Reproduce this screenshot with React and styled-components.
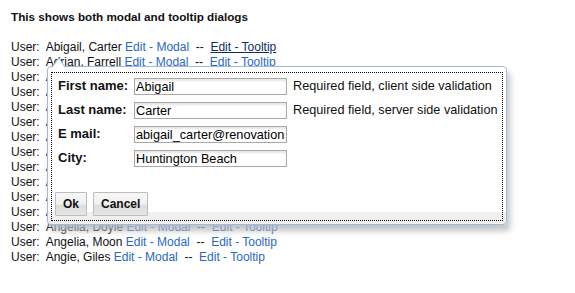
import React from "react";
import styled, { createGlobalStyle } from "styled-components";

const Global = createGlobalStyle`
  html, body { margin: 0; padding: 0; background: #fff; }
  body { font-family: "Liberation Sans", Arial, sans-serif; color: #111; }
`;

const Page = styled.div`
  position: relative;
  padding: 10px 11px 0;
  width: 575px;
  height: 293px;
  box-sizing: border-box;
  overflow: hidden;
`;

const Title = styled.div`
  font-size: 11.7px;
  font-weight: bold;
  line-height: 13px;
  margin-bottom: 17px;
`;

const List = styled.div`
  display: flex;
  flex-direction: column;
`;

const Row = styled.div`
  font-size: 12px;
  line-height: 15px;
  white-space: nowrap;
`;

const Link = styled.a`
  color: ${(p) => (p.$hover ? "#0b2d63" : "#2a67c4")};
  text-decoration: ${(p) => (p.$hover ? "underline" : "none")};
  cursor: pointer;
`;

const Modal = styled.div`
  position: absolute;
  left: 47px;
  top: 66px;
  width: 460px;
  box-sizing: border-box;
  border: 1px solid #9dbcdb;
  border-radius: 4px;
  padding: 5px 3px 3px;
  background: linear-gradient(to bottom, #fff calc(100% - 12px), #f0f0f0 calc(100% - 12px));
  box-shadow: 3px 6px 6px rgba(185, 185, 185, 0.85);
`;

const Beak = styled.svg`
  position: absolute;
  left: 4px;
  top: -10px;
  width: 14px;
  height: 11px;
  overflow: visible;
`;

const Inner = styled.div`
  border: 1px dotted #000;
  padding: 5px 0 4px;
`;

const Form = styled.div`
  display: grid;
  grid-template-columns: 70px 153px auto;
  column-gap: 6px;
  row-gap: 7px;
  padding-left: 6px;
  align-items: center;
`;

const Label = styled.label`
  font-size: 13px;
  font-weight: bold;
  white-space: nowrap;
  line-height: 15px;
  margin-top: -2px;
`;

const Input = styled.input`
  box-sizing: border-box;
  width: 153px;
  height: 17px;
  margin: 0;
  padding: 0 1px;
  line-height: 15px;
  border: 1px solid #a9a9a9;
  box-shadow: inset 0 2px 2px #e6e6e6;
  font-family: "Liberation Sans", Arial, sans-serif;
  font-size: 12.7px;
  color: #000;
  background: #fff;
  outline: none;
`;

const Message = styled.span`
  font-size: 12.7px;
  white-space: nowrap;
  line-height: 15px;
`;

const Buttons = styled.div`
  display: flex;
  gap: 6px;
  padding-left: 3px;
  margin-top: 25px;
`;

const Button = styled.button`
  height: 24px;
  margin: 0;
  padding: 0 7px;
  border: 1px solid #bdbdbd;
  border-radius: 1px;
  background: linear-gradient(to bottom, #f7f7f7 0%, #f0f0f0 52%, #dcdcdc 53%, #e6e6e6 100%);
  font-family: "Liberation Sans", Arial, sans-serif;
  font-size: 12px;
  font-weight: bold;
  color: #111;
`;

const users = [
  "Abigail, Carter",
  "Adrian, Farrell",
  "Aidan, Hughes",
  "Alan, Pierce",
  "Albert, Kent",
  "Alex, Barnes",
  "Alexa, Reed",
  "Alice, Warren",
  "Allison, Grant",
  "Amanda, Stone",
  "Amy, Walsh",
  "Andrew, Lowe",
  "Angelia, Doyle",
  "Angelia, Moon",
  "Angie, Giles",
];

const fields = [
  { label: "First name:", value: "Abigail", msg: "Required field, client side validation" },
  { label: "Last name:", value: "Carter", msg: "Required field, server side validation" },
  { label: "E mail:", value: "abigail_carter@renovations.com", msg: "" },
  { label: "City:", value: "Huntington Beach", msg: "" },
];

export default function App() {
  return (
    <>
      <Global />
      <Page>
        <Title>This shows both modal and tooltip dialogs</Title>
        <List>
          {users.map((u, i) => (
            <Row key={u}>
              User:&nbsp; {u} <Link>Edit - Modal</Link>&nbsp; --&nbsp;{" "}
              <Link $hover={i === 0}>Edit - Tooltip</Link>
            </Row>
          ))}
        </List>
        <Modal>
          <Beak viewBox="0 0 14 11">
            <path d="M0 10.5 L7 1 L13 10.5" fill="#fff" stroke="#9dbcdb" strokeWidth="1" />
          </Beak>
          <Inner>
            <Form>
              {fields.map((f) => (
                <React.Fragment key={f.label}>
                  <Label>{f.label}</Label>
                  <Input defaultValue={f.value} readOnly />
                  <Message>{f.msg}</Message>
                </React.Fragment>
              ))}
            </Form>
            <Buttons>
              <Button>Ok</Button>
              <Button>Cancel</Button>
            </Buttons>
          </Inner>
        </Modal>
      </Page>
    </>
  );
}
